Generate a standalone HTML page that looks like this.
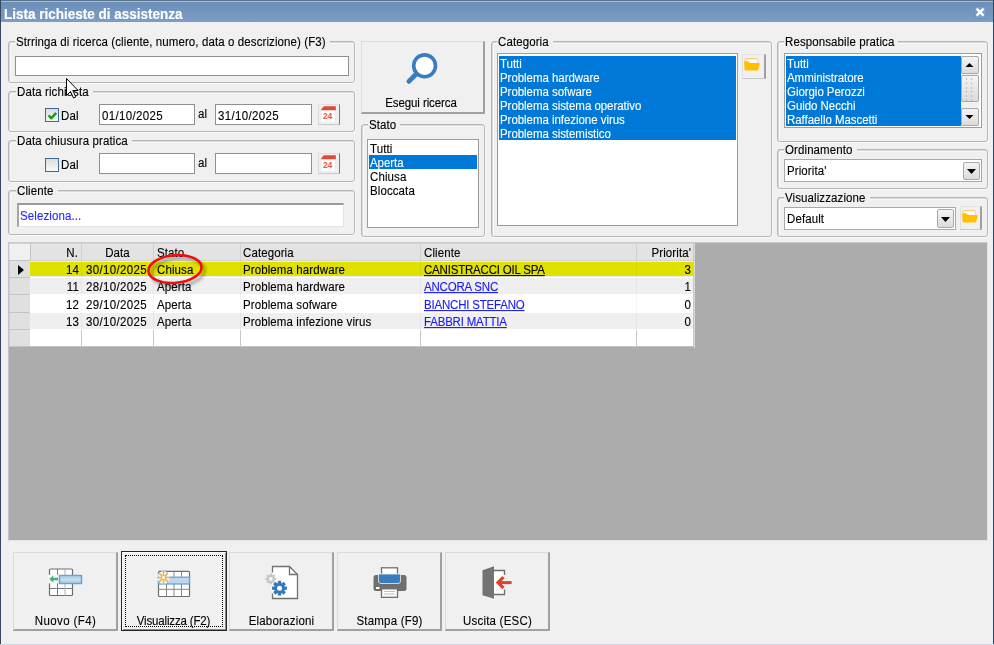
<!DOCTYPE html>
<html><head><meta charset="utf-8">
<style>
*{box-sizing:border-box}
html,body{margin:0;padding:0}
body{width:994px;height:645px;overflow:hidden;background:#f0f0f0;font-family:"Liberation Sans",sans-serif;font-size:11.5px;color:#000;position:relative}
.a{position:absolute}
.t{position:absolute;white-space:nowrap;line-height:13px;height:13px;letter-spacing:0.1px;transform:scaleY(1.08);transform-origin:0 10.5px;-webkit-text-stroke:0.12px currentColor}
.gb{position:absolute;border:1px solid #b6b6b6;border-radius:3px;box-shadow:inset 1px 1px 0 #d9d9d9,inset 2px 2px 0 #f8f8f8,1px 1px 0 #f8f8f8}
.gl{position:absolute;white-space:nowrap;line-height:13px;height:13px;background:#f0f0f0;padding:0 4px 0 1px;letter-spacing:0.1px;transform:scaleY(1.08);transform-origin:0 10.5px;-webkit-text-stroke:0.12px currentColor}
.w{-webkit-text-stroke:0.1px #fff;letter-spacing:-0.05px}
.dt{letter-spacing:0.35px}
.up{letter-spacing:-0.2px}
.bl{letter-spacing:0.2px}
.in{position:absolute;background:#fff;border:1px solid #8f8f8f}
.btn{position:absolute;background:#f0f0f0;border:1px solid;border-color:#dcdcdc #a0a0a0 #a0a0a0 #dcdcdc;border-right-width:2px;border-bottom-width:2px}
.sel{background:#0078d7;color:#fff}
.chk{position:absolute;width:14px;height:14px;border:1px solid #3c6a98;background:linear-gradient(#dcdcdc,#f8f8f8)}
.cal{position:absolute;width:22px;height:21px;background:#f0f0f0;border:1px solid;border-color:#e0e0e0 #7a7a7a #c8c8c8 #d8d8d8}
.btn2{position:absolute;background:#f0f0f0;border:1px solid;border-color:#e0e0e0 #a0a0a0 #c8c8c8 #e0e0e0;border-right-width:2px}
.sbtn{position:absolute;border:1px solid #a9a9a9;border-radius:2px;background:linear-gradient(#f4f4f4,#dcdcdc)}
.bb{position:absolute;background:#f0f0f0;border:1px solid;border-color:#dadada #a0a0a0 #a0a0a0 #dadada;border-right-width:2px;border-bottom-width:2px}
</style></head><body>
<!-- window frame -->
<div class="a" style="left:0;top:0;width:994px;height:22px;background:linear-gradient(#678eb8,#7d9dc5)"></div>
<div class="a" style="left:0;top:0;width:994px;height:1px;background:#5c7088"></div>
<div class="a" style="left:1px;top:1px;width:992px;height:1px;background:#a3bddb"></div>
<div class="a" style="left:0;top:0;width:1px;height:645px;background:#34495f"></div>
<div class="a" style="left:1px;top:22px;width:1px;height:622px;background:#e7eef5"></div>
<div class="a" style="left:993px;top:0;width:1px;height:645px;background:#34495f"></div>
<div class="a" style="left:992px;top:22px;width:1px;height:622px;background:#e7eef5"></div>
<div class="a" style="left:0;top:644px;width:994px;height:1px;background:#c8d6e4"></div>
<div class="t" style="left:4px;top:7px;font-size:13.5px;font-weight:bold;color:#fff;line-height:16px;height:16px;letter-spacing:0;transform:scaleY(1.06);transform-origin:0 13px;-webkit-text-stroke:0.15px #fff">Lista richieste di assistenza</div>
<div class="a" style="left:974px;top:6px;width:13px;height:13px;background:#7a9cc9;border:1px solid #6d90bf"></div>
<svg class="a" style="left:974px;top:6px" width="13" height="13" viewBox="0 0 13 13"><path d="M2.6 2.6 L9.6 9.6 M9.6 2.6 L2.6 9.6" stroke="#fff" stroke-width="2.3"/></svg>

<!-- Strringa -->
<div class="gb" style="left:8px;top:41px;width:347px;height:42px"></div>
<div class="gl" style="left:15px;top:36px">Strringa di ricerca (cliente, numero, data o descrizione) (F3)</div>
<div class="in" style="left:15px;top:56px;width:334px;height:20px"></div>

<!-- Data richiesta -->
<div class="gb" style="left:8px;top:91px;width:347px;height:41px"></div>
<div class="gl" style="left:16px;top:86px">Data richiesta</div>

<!-- Data chiusura -->
<div class="gb" style="left:8px;top:140px;width:347px;height:42px"></div>
<div class="gl" style="left:16px;top:135px">Data chiusura pratica</div>

<!-- Cliente -->
<div class="gb" style="left:8px;top:190px;width:347px;height:45px"></div>
<div class="gl" style="left:16px;top:185px">Cliente</div>


<!-- Data richiesta row -->
<div class="chk" style="left:45px;top:108px"><svg width="13" height="13" viewBox="0 0 13 13" style="position:absolute;left:0;top:0"><path d="M2.6 6.3 L5.2 9.3 L10.2 3.8" stroke="#14a014" stroke-width="2.5" fill="none" stroke-linejoin="round"/></svg></div>
<div class="t" style="left:61px;top:110px">Dal</div>
<div class="in" style="left:99px;top:104px;width:96px;height:21px"></div>
<div class="t dt" style="left:102px;top:110px">01/10/2025</div>
<div class="t" style="left:198px;top:108px">al</div>
<div class="in" style="left:215px;top:104px;width:97px;height:21px"></div>
<div class="t dt" style="left:218px;top:110px">31/10/2025</div>
<div class="cal" style="left:318px;top:104px"><svg width="20" height="19" viewBox="0 0 20 19" style="position:absolute;left:0;top:0"><rect x="2" y="3" width="14.5" height="14.5" fill="#fff" stroke="#ececec" stroke-width="1"/><path d="M4.6 1.2 L16.8 1.2 L16.8 5.2 L1.6 5.2 Z" fill="#e0493b"/><text x="8.6" y="13.6" text-anchor="middle" font-family="Liberation Sans" font-weight="bold" font-size="8.6" fill="#e65a4a" letter-spacing="-0.2">24</text></svg></div>
<!-- Data chiusura row -->
<div class="chk" style="left:45px;top:158px"></div>
<div class="t" style="left:61px;top:159px">Dal</div>
<div class="in" style="left:99px;top:153px;width:96px;height:21px"></div>
<div class="t" style="left:198px;top:157px">al</div>
<div class="in" style="left:215px;top:153px;width:97px;height:21px"></div>
<div class="cal" style="left:318px;top:153px"><svg width="20" height="19" viewBox="0 0 20 19" style="position:absolute;left:0;top:0"><rect x="2" y="3" width="14.5" height="14.5" fill="#fff" stroke="#ececec" stroke-width="1"/><path d="M4.6 1.2 L16.8 1.2 L16.8 5.2 L1.6 5.2 Z" fill="#e0493b"/><text x="8.6" y="13.6" text-anchor="middle" font-family="Liberation Sans" font-weight="bold" font-size="8.6" fill="#e65a4a" letter-spacing="-0.2">24</text></svg></div>
<!-- Cliente -->
<div class="a" style="left:17px;top:203px;width:327px;height:24px;background:#fff;border-top:2px solid #9a9a9a;border-left:2px solid #a4a4a4;border-right:1px solid #e3e3e3;border-bottom:1px solid #e3e3e3"></div>
<div class="t" style="left:20px;top:210px;color:#2a2aff">Seleziona...</div>

<!-- Esegui ricerca -->
<div class="btn" style="left:361px;top:41px;width:124px;height:73px"></div>
<svg class="a" style="left:405px;top:50px" width="36" height="36" viewBox="0 0 36 36"><path d="M12.5 22.8 L3.9 31.4" stroke="#3a7cc0" stroke-width="4.8" stroke-linecap="round"/><circle cx="19.6" cy="15.8" r="10.9" stroke="#3a7cc0" stroke-width="3.6" fill="#fff"/></svg>
<div class="t" style="left:359px;width:124px;text-align:center;top:97px;letter-spacing:-0.1px">Esegui ricerca</div>

<!-- Stato -->
<div class="gb" style="left:361px;top:124px;width:124px;height:113px"></div>
<div class="gl" style="left:368px;top:119px">Stato</div>

<div class="in" style="left:367px;top:139px;width:112px;height:89px;border-color:#9c9c9c"></div>
<div class="t" style="left:370px;top:143px">Tutti</div>
<div class="a sel" style="left:369px;top:155px;width:108px;height:14px"></div>
<div class="t w" style="left:370px;top:157px;color:#fff">Aperta</div>
<div class="t" style="left:370px;top:171px">Chiusa</div>
<div class="t" style="left:370px;top:185px">Bloccata</div>

<!-- Categoria -->
<div class="gb" style="left:491px;top:41px;width:281px;height:196px"></div>
<div class="gl" style="left:497px;top:36px">Categoria</div>

<div class="in" style="left:497px;top:53px;width:241px;height:173px;border-color:#9c9c9c"></div>
<div class="a sel" style="left:499px;top:56px;width:237px;height:84px"></div>
<div class="t w" style="left:500px;top:58px;color:#fff">Tutti</div>
<div class="t w" style="left:500px;top:72px;color:#fff">Problema hardware</div>
<div class="t w" style="left:500px;top:86px;color:#fff">Problema sofware</div>
<div class="t w" style="left:500px;top:100px;color:#fff">Problema sistema operativo</div>
<div class="t w" style="left:500px;top:114px;color:#fff">Problema infezione virus</div>
<div class="t w" style="left:500px;top:128px;color:#fff">Problema sistemistico</div>
<div class="btn2" style="left:742px;top:54px;width:24px;height:25px"></div>
<svg class="a" style="left:744px;top:58px" width="17" height="14" viewBox="0 0 17 14"><rect x="0.6" y="0.3" width="13.4" height="7" rx="1.5" fill="#f7bd55"/><rect x="1.4" y="1.2" width="12" height="5" fill="#fff"/><path d="M0.2 4 Q0.2 3.3 1 3.3 L4.3 3.3 L5.8 5 L15 5 Q16 5 15.7 6.2 L14.3 11.6 Q14 12.6 13 12.6 L1.6 12.6 Q0.6 12.6 0.5 11.6 Z" fill="#ffc000"/></svg>

<!-- Responsabile -->
<div class="gb" style="left:777px;top:41px;width:211px;height:101px"></div>
<div class="gl" style="left:784px;top:36px">Responsabile pratica</div>

<div class="in" style="left:784px;top:53px;width:198px;height:75px;border-color:#9c9c9c"></div>
<div class="a sel" style="left:786px;top:56px;width:176px;height:70px"></div><div class="a" style="left:961px;top:56px;width:1px;height:70px;background:#e8e8e8"></div>
<div class="t w" style="left:787px;top:58px;color:#fff">Tutti</div>
<div class="t w" style="left:787px;top:72px;color:#fff">Amministratore</div>
<div class="t w" style="left:787px;top:86px;color:#fff">Giorgio Perozzi</div>
<div class="t w" style="left:787px;top:100px;color:#fff">Guido Necchi</div>
<div class="t w" style="left:787px;top:114px;color:#fff">Raffaello Mascetti</div>
<div class="a" style="left:962px;top:56px;width:17px;height:70px;background:#f0f0f0"></div>
<div class="sbtn" style="left:961px;top:56px;width:18px;height:18px"><svg width="15" height="16" viewBox="0 0 15 16" style="position:absolute;left:0;top:0"><path d="M3.5 10 L11.5 10 L7.5 6 Z" fill="#000"/></svg></div>
<div class="sbtn" style="left:961px;top:75px;width:18px;height:27px"><svg width="15" height="25" viewBox="0 0 15 25" style="position:absolute;left:0;top:0"><path d="M4 3.5 L5 2.5" stroke="#b4b4b4" stroke-width="1.1"/><path d="M9 3.5 L10 2.5" stroke="#b4b4b4" stroke-width="1.1"/><path d="M4 8 L5 7" stroke="#b4b4b4" stroke-width="1.1"/><path d="M9 8 L10 7" stroke="#b4b4b4" stroke-width="1.1"/><path d="M4 12.5 L5 11.5" stroke="#b4b4b4" stroke-width="1.1"/><path d="M9 12.5 L10 11.5" stroke="#b4b4b4" stroke-width="1.1"/><path d="M4 16 L5 15" stroke="#b4b4b4" stroke-width="1.1"/><path d="M9 16 L10 15" stroke="#b4b4b4" stroke-width="1.1"/><path d="M4 20.5 L5 19.5" stroke="#b4b4b4" stroke-width="1.1"/><path d="M9 20.5 L10 19.5" stroke="#b4b4b4" stroke-width="1.1"/><path d="M4 24.5 L5 23.5" stroke="#b4b4b4" stroke-width="1.1"/><path d="M9 24.5 L10 23.5" stroke="#b4b4b4" stroke-width="1.1"/></svg></div>
<div class="sbtn" style="left:961px;top:108px;width:18px;height:18px"><svg width="15" height="16" viewBox="0 0 15 16" style="position:absolute;left:0;top:0"><path d="M3.5 6 L11.5 6 L7.5 10 Z" fill="#000"/></svg></div>

<!-- Ordinamento -->
<div class="gb" style="left:777px;top:149px;width:211px;height:40px"></div>
<div class="gl" style="left:784px;top:144px">Ordinamento</div>

<div class="in" style="left:784px;top:159px;width:198px;height:23px;border-color:#a8a8a8"></div>
<div class="t" style="left:787px;top:165px">Priorita'</div>
<div class="sbtn" style="left:963px;top:162px;width:17px;height:18px"><svg width="15" height="16" viewBox="0 0 15 16" style="position:absolute;left:0;top:0"><path d="M3 6 L12 6 L7.5 11 Z" fill="#000"/></svg></div>

<!-- Visualizzazione -->
<div class="gb" style="left:777px;top:197px;width:211px;height:40px"></div>
<div class="gl" style="left:784px;top:192px">Visualizzazione</div>

<div class="in" style="left:784px;top:207px;width:172px;height:23px;border-color:#a8a8a8"></div>
<div class="t" style="left:787px;top:213px">Default</div>
<div class="sbtn" style="left:937px;top:209px;width:17px;height:19px"><svg width="15" height="17" viewBox="0 0 15 17" style="position:absolute;left:0;top:0"><path d="M3 7 L12 7 L7.5 12 Z" fill="#000"/></svg></div>
<div class="btn2" style="left:960px;top:206px;width:22px;height:24px"></div>
<svg class="a" style="left:962px;top:210px" width="17" height="14" viewBox="0 0 17 14"><rect x="0.6" y="0.3" width="13.4" height="7" rx="1.5" fill="#f7bd55"/><rect x="1.4" y="1.2" width="12" height="5" fill="#fff"/><path d="M0.2 4 Q0.2 3.3 1 3.3 L4.3 3.3 L5.8 5 L15 5 Q16 5 15.7 6.2 L14.3 11.6 Q14 12.6 13 12.6 L1.6 12.6 Q0.6 12.6 0.5 11.6 Z" fill="#ffc000"/></svg>

<!-- grid area -->
<div class="a" style="left:8px;top:242px;width:980px;height:299px;background:#acacac;border-left:1px solid #c4c4c8;border-top:1px solid #c8c8c8;border-right:1px solid #e4e4e4;border-bottom:1px solid #e4e4e4"></div>

<!-- GRID -->
<div class="a" style="left:9px;top:243px;width:685px;height:104px;background:#fff"></div>
<div class="a" style="left:9px;top:243px;width:685px;height:18px;background:#e3e3e3;border-top:1px solid #d6d6d6"></div>
<div class="a" style="left:10px;top:244px;width:20px;height:16px;background:#f0f0f0"></div>
<div class="a" style="left:30px;top:261px;width:663px;height:16px;background:#ececf2"></div>
<div class="a" style="left:30px;top:262px;width:663px;height:14px;background:#e1e100"></div>
<div class="a" style="left:9px;top:261px;width:21px;height:16px;background:#e0e0e0;border-left:1px solid #d0d0d0"></div>
<div class="a" style="left:30px;top:278px;width:663px;height:16px;background:#efefef"></div>
<div class="a" style="left:9px;top:278px;width:21px;height:16px;background:#e0e0e0;border-left:1px solid #d0d0d0"></div>
<div class="a" style="left:30px;top:295px;width:663px;height:17px;background:#ffffff"></div>
<div class="a" style="left:9px;top:295px;width:21px;height:17px;background:#e0e0e0;border-left:1px solid #d0d0d0"></div>
<div class="a" style="left:30px;top:313px;width:663px;height:16px;background:#efefef"></div>
<div class="a" style="left:9px;top:313px;width:21px;height:16px;background:#e0e0e0;border-left:1px solid #d0d0d0"></div>
<div class="a" style="left:30px;top:330px;width:663px;height:16px;background:#ffffff"></div>
<div class="a" style="left:9px;top:330px;width:21px;height:16px;background:#e0e0e0;border-left:1px solid #d0d0d0"></div>
<div class="a" style="left:9px;top:260px;width:21px;height:1px;background:#c3c3c3"></div>
<div class="a" style="left:9px;top:277px;width:21px;height:1px;background:#c3c3c3"></div>
<div class="a" style="left:9px;top:294px;width:21px;height:1px;background:#c3c3c3"></div>
<div class="a" style="left:9px;top:312px;width:21px;height:1px;background:#c3c3c3"></div>
<div class="a" style="left:9px;top:329px;width:21px;height:1px;background:#c3c3c3"></div>
<div class="a" style="left:9px;top:346px;width:21px;height:1px;background:#c3c3c3"></div>
<div class="a" style="left:30px;top:260px;width:663px;height:1px;background:#d4d4d4"></div>
<div class="a" style="left:9px;top:346px;width:685px;height:1px;background:#c3c3c3"></div>
<div class="a" style="left:30px;top:243px;width:1px;height:17px;background:#c3c3c3"></div>
<div class="a" style="left:81px;top:244px;width:1px;height:16px;background:#d0d0d0"></div>
<div class="a" style="left:81px;top:330px;width:1px;height:16px;background:#c8c8c8"></div>
<div class="a" style="left:81px;top:261px;width:1px;height:69px;background:rgba(0,0,0,0.04)"></div>
<div class="a" style="left:153px;top:244px;width:1px;height:16px;background:#d0d0d0"></div>
<div class="a" style="left:153px;top:330px;width:1px;height:16px;background:#c8c8c8"></div>
<div class="a" style="left:153px;top:261px;width:1px;height:69px;background:rgba(0,0,0,0.04)"></div>
<div class="a" style="left:240px;top:244px;width:1px;height:16px;background:#d0d0d0"></div>
<div class="a" style="left:240px;top:330px;width:1px;height:16px;background:#c8c8c8"></div>
<div class="a" style="left:240px;top:261px;width:1px;height:69px;background:rgba(0,0,0,0.04)"></div>
<div class="a" style="left:420px;top:244px;width:1px;height:16px;background:#d0d0d0"></div>
<div class="a" style="left:420px;top:330px;width:1px;height:16px;background:#c8c8c8"></div>
<div class="a" style="left:420px;top:261px;width:1px;height:69px;background:rgba(0,0,0,0.04)"></div>
<div class="a" style="left:636px;top:244px;width:1px;height:16px;background:#d0d0d0"></div>
<div class="a" style="left:636px;top:330px;width:1px;height:16px;background:#c8c8c8"></div>
<div class="a" style="left:636px;top:261px;width:1px;height:69px;background:rgba(0,0,0,0.04)"></div>
<div class="a" style="left:693px;top:243px;width:1px;height:104px;background:#c8c8c8"></div>
<div class="a" style="left:694px;top:243px;width:1px;height:105px;background:#d8d8d8"></div>
<svg class="a" style="left:17px;top:264px" width="8" height="12" viewBox="0 0 8 12"><path d="M1 1 L7 6 L1 11 Z" fill="#000"/></svg>
<div class="t" style="left:31px;width:47px;text-align:right;top:247px">N.</div>
<div class="t" style="left:82px;width:71px;text-align:center;top:247px">Data</div>
<div class="t" style="left:157px;top:247px">Stato</div>
<div class="t" style="left:243px;top:247px">Categoria</div>
<div class="t" style="left:424px;top:247px">Cliente</div>
<div class="t" style="left:637px;width:54px;text-align:right;top:247px">Priorita'</div>
<div class="t" style="left:31px;width:48px;text-align:right;top:264px">14</div>
<div class="t dt" style="left:86px;top:264px">30/10/2025</div>
<div class="t" style="left:157px;top:264px">Chiusa</div>
<div class="t" style="left:243px;top:264px">Problema hardware</div>
<div class="t up" style="left:424px;top:264px;color:#000;text-decoration:underline">CANISTRACCI OIL SPA</div>
<div class="t" style="left:637px;width:54px;text-align:right;top:264px">3</div>
<div class="t" style="left:31px;width:48px;text-align:right;top:281px">11</div>
<div class="t dt" style="left:86px;top:281px">28/10/2025</div>
<div class="t" style="left:157px;top:281px">Aperta</div>
<div class="t" style="left:243px;top:281px">Problema hardware</div>
<div class="t up" style="left:424px;top:281px;color:#1a1aff;text-decoration:underline">ANCORA SNC</div>
<div class="t" style="left:637px;width:54px;text-align:right;top:281px">1</div>
<div class="t" style="left:31px;width:48px;text-align:right;top:299px">12</div>
<div class="t dt" style="left:86px;top:299px">29/10/2025</div>
<div class="t" style="left:157px;top:299px">Aperta</div>
<div class="t" style="left:243px;top:299px">Problema sofware</div>
<div class="t up" style="left:424px;top:299px;color:#1a1aff;text-decoration:underline">BIANCHI STEFANO</div>
<div class="t" style="left:637px;width:54px;text-align:right;top:299px">0</div>
<div class="t" style="left:31px;width:48px;text-align:right;top:316px">13</div>
<div class="t dt" style="left:86px;top:316px">30/10/2025</div>
<div class="t" style="left:157px;top:316px">Aperta</div>
<div class="t" style="left:243px;top:316px">Problema infezione virus</div>
<div class="t up" style="left:424px;top:316px;color:#1a1aff;text-decoration:underline">FABBRI MATTIA</div>
<div class="t" style="left:637px;width:54px;text-align:right;top:316px">0</div>
<svg class="a" style="left:140px;top:246px" width="80" height="48" viewBox="0 0 80 48"><defs><filter id="sh" x="-30%" y="-30%" width="160%" height="160%"><feGaussianBlur stdDeviation="1.6"/></filter></defs><ellipse cx="38" cy="26" rx="26.6" ry="13.8" fill="none" stroke="rgba(0,0,0,0.35)" stroke-width="2.6" transform="rotate(-5 38 26)" filter="url(#sh)"/><ellipse cx="35" cy="23" rx="26.6" ry="13.8" fill="none" stroke="#f20d0d" stroke-width="2.5" transform="rotate(-5 35 23)"/></svg>

<!-- buttons -->
<div class="bb" style="left:13px;top:552px;width:105px;height:79px"></div>
<div class="t bl" style="left:13px;width:105px;text-align:center;top:615px;letter-spacing:0.4px">Nuovo (F4)</div>
<div class="a" style="left:121px;top:551px;width:106px;height:80px;border:1px solid #2b2424;background:#f0f0f0;box-shadow:inset 1px 1px 0 #fbfbfb,inset -1px -1px 0 #8a8a8a"></div>
<div class="a" style="left:125px;top:555px;width:98px;height:72px;border:1px dotted #000"></div>
<div class="t bl" style="left:121px;width:105px;text-align:center;top:615px;letter-spacing:-0.15px">Visualizza (F2)</div>
<div class="bb" style="left:229px;top:552px;width:105px;height:79px"></div>
<div class="t bl" style="left:229px;width:105px;text-align:center;top:615px">Elaborazioni</div>
<div class="bb" style="left:337px;top:552px;width:105px;height:79px"></div>
<div class="t bl" style="left:337px;width:105px;text-align:center;top:615px">Stampa (F9)</div>
<div class="bb" style="left:445px;top:552px;width:105px;height:79px"></div>
<div class="t bl" style="left:445px;width:105px;text-align:center;top:615px">Uscita (ESC)</div>
<svg class="a" style="left:45px;top:565px" width="40" height="34" viewBox="0 0 40 34"><rect x="4.5" y="4" width="23" height="26.5" rx="1" fill="#fff" stroke="#6e6e6e" stroke-width="1.2"/><path d="M12.5 4 V30.5 M4.5 23.5 H27.5" stroke="#7a7a7a" stroke-width="1"/><path d="M20 4 V30.5" stroke="#b0b0b0" stroke-width="1"/><rect x="3" y="9.8" width="11" height="8.5" fill="#f7f7f7"/><rect x="14.5" y="10.5" width="22" height="8" fill="#bcd2ea" stroke="#62a6d2" stroke-width="1.5"/><path d="M15.5 14.5 H35.5" stroke="#d0e0f0" stroke-width="1"/><path d="M4.3 14 L8.3 10.5 L8.3 12.8 L13 12.8 L13 15.2 L8.3 15.2 L8.3 17.5 Z" fill="#46ad80"/></svg>
<svg class="a" style="left:155px;top:566px" width="40" height="34" viewBox="0 0 40 34"><rect x="3.5" y="5.3" width="31" height="25.2" rx="1" fill="#fff" stroke="#6e6e6e" stroke-width="1.2"/><path d="M11.5 5.5 V30.5 M19 5.5 V30.5 M26.5 5.5 V30.5 M3.5 23.3 H34.5" stroke="#858585" stroke-width="1"/><rect x="3.5" y="11.2" width="31" height="6.8" fill="#c2d5ea" stroke="#62a6d2" stroke-width="1.3"/><circle cx="8.5" cy="11.5" r="6.5" fill="#fff" opacity="0.75"/><g stroke="#f2b03e" stroke-width="1.5"><path d="M8.5 5 V18 M2 11.5 H15 M3.9 6.9 L13.1 16.1 M13.1 6.9 L3.9 16.1"/></g><circle cx="8.5" cy="11.5" r="1.5" fill="#fff"/></svg>
<svg class="a" style="left:262px;top:562px" width="40" height="40" viewBox="0 0 40 40"><path d="M10.5 4.5 H27.5 L35.5 12.5 V36.5 H10.5 Z" fill="#fff"/><path d="M10.5 10.5 V4.5 H27.5 L35.5 12.5 V36.5 H10.5 V31.5" fill="none" stroke="#707070" stroke-width="1.3"/><path d="M27.5 4.5 V12.5 H35.5" fill="none" stroke="#707070" stroke-width="1.3"/>
<g transform="translate(8.8 16.9)"><g fill="#c6c6c6"><circle r="4"/><rect x="-1.1" y="-5.4" width="2.2" height="10.8"/><rect x="-5.4" y="-1.1" width="10.8" height="2.2"/><rect x="-1.1" y="-5.4" width="2.2" height="10.8" transform="rotate(45)"/><rect x="-1.1" y="-5.4" width="2.2" height="10.8" transform="rotate(-45)"/></g><circle r="1.9" fill="#f8f8f8"/></g>
<circle cx="17.5" cy="26.2" r="8.5" fill="#fff" opacity="0.6"/>
<g transform="translate(17.5 26.2)"><g fill="#3478c0"><circle r="5.4"/><rect x="-1.7" y="-7.4" width="3.4" height="14.8"/><rect x="-7.4" y="-1.7" width="14.8" height="3.4"/><rect x="-1.7" y="-7.4" width="3.4" height="14.8" transform="rotate(45)"/><rect x="-1.7" y="-7.4" width="3.4" height="14.8" transform="rotate(-45)"/></g><circle r="2.5" fill="#fff"/></g></svg>
<svg class="a" style="left:370px;top:564px" width="40" height="36" viewBox="0 0 40 36"><rect x="11.5" y="3.8" width="16" height="8" fill="#fff" stroke="#6e6e6e" stroke-width="1.3"/><rect x="3.5" y="11" width="33" height="16" rx="2.5" fill="#6e6e6e"/><path d="M8.5 10 H30.5 V17 Q30.5 19.5 28 19.5 H11 Q8.5 19.5 8.5 17 Z" fill="#3a7cc0" stroke="#f0f0f0" stroke-width="0.8"/><rect x="6" y="23" width="3.5" height="2" fill="#fff"/><rect x="11.5" y="24.8" width="16" height="8.5" fill="#fff" stroke="#6e6e6e" stroke-width="1.3"/><path d="M14 27.5 H25 M14 30 H25" stroke="#c0c0c0" stroke-width="1.2"/></svg>
<svg class="a" style="left:478px;top:563px" width="40" height="38" viewBox="0 0 40 38"><rect x="16" y="7.5" width="10.5" height="24" fill="#fff"/><path d="M16 7.5 H26.5 V12 M26.5 26.5 V31.5 H16" fill="none" stroke="#6e6e6e" stroke-width="1.4"/><path d="M4.5 7.3 L16 3.2 L16 35.8 L4.5 32.3 Z" fill="#737373"/><path d="M25.5 14.2 L20 19.6 L25.5 25" fill="none" stroke="#d9442e" stroke-width="3.2" stroke-linejoin="miter"/><path d="M20.5 19.6 H33.6" stroke="#d9442e" stroke-width="3"/></svg>
<svg class="a" style="left:65px;top:77px;z-index:10" width="16" height="24" viewBox="0 0 16 24"><path d="M1.5 1.5 L1.5 18.5 L5.5 14.5 L8.5 21 L10.8 20 L7.8 13.5 L13 13.5 Z" fill="#fff" stroke="#000" stroke-width="1" stroke-linejoin="miter"/></svg>
</body></html>
